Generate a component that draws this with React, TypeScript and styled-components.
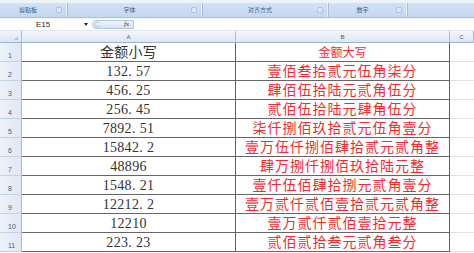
import React from "react";
import styled, { createGlobalStyle } from "styled-components";

const amounts = [
  { small: "132.57", big: "壹佰叁拾贰元伍角柒分" },
  { small: "456.25", big: "肆佰伍拾陆元贰角伍分" },
  { small: "256.45", big: "贰佰伍拾陆元肆角伍分" },
  { small: "7892.51", big: "柒仟捌佰玖拾贰元伍角壹分" },
  { small: "15842.2", big: "壹万伍仟捌佰肆拾贰元贰角整" },
  { small: "48896", big: "肆万捌仟捌佰玖拾陆元整" },
  { small: "1548.21", big: "壹仟伍佰肆拾捌元贰角壹分" },
  { small: "12212.2", big: "壹万贰仟贰佰壹拾贰元贰角整" },
  { small: "12210", big: "壹万贰仟贰佰壹拾元整" },
  { small: "223.23", big: "贰佰贰拾叁元贰角叁分" },
];

const groups = [
  { label: "剪贴板", width: 68 },
  { label: "字体", width: 135 },
  { label: "对齐方式", width: 126 },
  { label: "数字", width: 79 },
];

const GlobalStyle = createGlobalStyle`
  html, body {
    margin: 0;
    padding: 0;
    background: #fff;
    overflow: hidden;
  }
  body {
    font-family: "Noto Sans CJK SC", sans-serif;
  }
`;

const Page = styled.div`
  width: 474px;
  height: 253px;
  overflow: hidden;
  background: #fff;
`;

const Ribbon = styled.div`
  height: 19px;
  padding-top: 3px;
  box-sizing: border-box;
  background: #edf3fb;
`;

const RibbonBand = styled.div`
  display: flex;
  height: 15px;
  background: linear-gradient(#d3e2f5, #c3d7ef);
  border-bottom: 1px solid #a9c1de;
  box-sizing: border-box;
`;

const Group = styled.div<{ $width: number }>`
  width: ${(p) => p.$width}px;
  display: flex;
  align-items: center;
  border-right: 1px solid #a8bfdc;
  box-shadow: inset -1px 0 0 #e6eef9;
  box-sizing: border-box;
  padding-right: 5px;
`;

const GroupLabel = styled.span`
  flex: 1;
  text-align: center;
  font-size: 6px;
  color: #3d5c8a;
  line-height: 1;
`;

const Launcher = styled.span`
  width: 4px;
  height: 4px;
  border: 1px solid #b2c5dd;
  border-radius: 1px;
  background: #dbe7f5;
`;

const FormulaBar = styled.div`
  display: flex;
  align-items: center;
  height: 12px;
  background: #fff;
  border-bottom: 1px solid #dfe6ef;
  box-sizing: border-box;
`;

const NameBox = styled.div`
  width: 84px;
  padding-left: 2px;
  box-sizing: border-box;
  text-align: center;
  font-family: "Liberation Sans", sans-serif;
  font-size: 8px;
  color: #2a2a2a;
  line-height: 1;
`;

const Arrow = styled.span`
  width: 0;
  height: 0;
  margin: 0 4px 0 0;
  border-left: 2px solid transparent;
  border-right: 2px solid transparent;
  border-top: 3px solid #222;
`;

const FxBox = styled.div`
  display: flex;
  align-items: center;
  justify-content: space-between;
  width: 42px;
  height: 9px;
  padding: 0 4px 0 1px;
  box-sizing: border-box;
  background: linear-gradient(#f0f4fa, #d6e2f0);
  border: 1px solid #b4c6dc;
  border-radius: 5px 1px 1px 5px;
`;

const Fx = styled.span`
  font-family: "Liberation Serif", serif;
  font-style: italic;
  font-size: 7px;
  color: #333;
  line-height: 1;
`;

const Sheet = styled.div`
  display: grid;
  grid-template-columns: 22px 214px 214px 1fr;
  grid-template-rows: 12px repeat(11, 19px);
`;

const Corner = styled.div`
  position: relative;
  background: linear-gradient(#f1f5fb, #dbe5f2);
  border-right: 1px solid #a9bcd3;
  border-bottom: 1px solid #9db3cc;

  svg {
    position: absolute;
    right: 3px;
    bottom: 2px;
  }
`;

const ColHead = styled.div`
  display: flex;
  align-items: center;
  justify-content: center;
  background: linear-gradient(#f3f6fb, #dde6f2);
  border-right: 1px solid #a9bcd3;
  border-bottom: 1px solid #9db3cc;
  font-family: "Liberation Sans", sans-serif;
  font-size: 6px;
  color: #4e5b6e;
`;

const RowHead = styled.div`
  display: flex;
  align-items: flex-end;
  padding: 0 0 2px 8px;
  background: linear-gradient(90deg, #eef3fa, #dee7f3);
  border-right: 1px solid #a9bcd3;
  border-bottom: 1px solid #c4d2e4;
  font-family: "Liberation Sans", sans-serif;
  font-size: 7px;
  line-height: 1;
  color: #4b5d7b;
`;

const Cell = styled.div<{ $red?: boolean; $head?: boolean }>`
  display: flex;
  align-items: center;
  justify-content: center;
  padding-top: 1px;
  border-right: 1px solid #5e5e5e;
  border-bottom: 1px solid #666;
  white-space: nowrap;
  line-height: 1;
  font-family: "Liberation Serif", "Noto Sans CJK SC", serif;
  color: ${(p) => (p.$red ? "#ef2d2d" : "#333")};
  font-size: ${(p) => (p.$red && p.$head ? "12px" : "14px")};
  letter-spacing: ${(p) => (p.$red ? (p.$head ? "0px" : "1px") : "0.3px")};
`;

const Dot = styled.span`
  margin-right: 4px;
`;

const EmptyCell = styled.div`
  border-bottom: 1px solid #dde3eb;
`;

const Amount = ({ value }: { value: string }) => {
  const [whole, frac] = value.split(".");
  return (
    <>
      {whole}
      {frac !== undefined && (
        <>
          <Dot>.</Dot>
          {frac}
        </>
      )}
    </>
  );
};

export default function App() {
  return (
    <Page>
      <GlobalStyle />
      <Ribbon>
        <RibbonBand>
          {groups.map((g) => (
            <Group key={g.label} $width={g.width}>
              <GroupLabel>{g.label}</GroupLabel>
              <Launcher />
            </Group>
          ))}
        </RibbonBand>
      </Ribbon>
      <FormulaBar>
        <NameBox>E15</NameBox>
        <Arrow />
        <FxBox>
          <svg width="7" height="7" viewBox="0 0 7 7">
            <path d="M5.5 2 A2.5 2.5 0 1 0 5.5 5" fill="none" stroke="#b3c3d6" strokeWidth="1" />
          </svg>
          <Fx>fx</Fx>
        </FxBox>
      </FormulaBar>
      <Sheet>
        <Corner>
          <svg width="4" height="4" viewBox="0 0 4 4">
            <path d="M4 0 L4 4 L0 4 Z" fill="#b7c6d8" />
          </svg>
        </Corner>
        <ColHead>A</ColHead>
        <ColHead>B</ColHead>
        <ColHead>C</ColHead>

        <RowHead>1</RowHead>
        <Cell $head>金额小写</Cell>
        <Cell $head $red>
          金额大写
        </Cell>
        <EmptyCell />

        {amounts.map((a, i) => (
          <React.Fragment key={a.small}>
            <RowHead>{i + 2}</RowHead>
            <Cell>
              <Amount value={a.small} />
            </Cell>
            <Cell $red>{a.big}</Cell>
            <EmptyCell />
          </React.Fragment>
        ))}
      </Sheet>
    </Page>
  );
}
